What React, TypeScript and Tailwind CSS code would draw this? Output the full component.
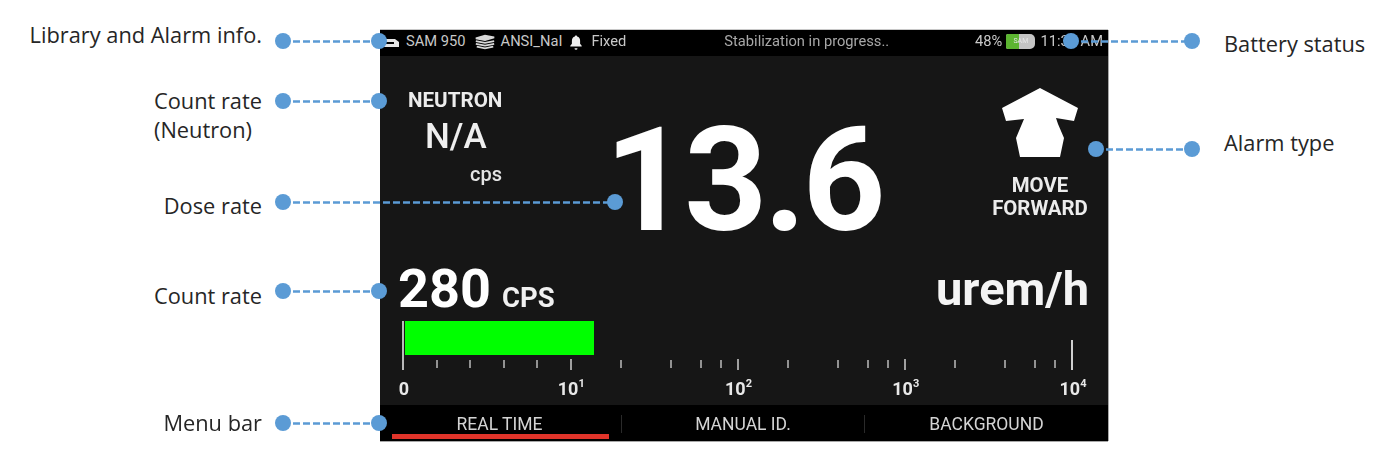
import React from "react";

const minorTicks = [437, 470, 504, 537, 621, 671, 701, 721, 788, 838, 868, 888, 955, 1005, 1035, 1055];
const majorTicks = [571, 738, 905];

function Pin({ className }: { className: string }) {
  return <span className={`absolute z-20 h-4 w-4 rounded-full bg-[#5b9bd5] ${className}`} />;
}

function Lead({ className, width }: { className: string; width: number }) {
  return (
    <svg className={`absolute z-10 h-[3px] ${className}`} width={width} height={3}>
      <line x1={0} y1={1.5} x2={width} y2={1.5} stroke="#5b9bd5" strokeWidth={2.4} strokeDasharray="7 3" />
    </svg>
  );
}

function Label({ className, children }: { className: string; children: React.ReactNode }) {
  return (
    <div className={`absolute whitespace-nowrap text-[21.8px] leading-[29px] text-[#262626] [font-family:'Open_Sans',sans-serif] ${className}`}>
      {children}
    </div>
  );
}

function AxisLabel({ base, exp }: { base: string; exp?: string }) {
  return (
    <div className="flex w-0 justify-center whitespace-nowrap text-[18px] font-bold leading-5 text-[#e8e8e8]">
      <span>
        {base}
        {exp && <sup className="relative top-[-1px] align-super text-[11px] leading-none">{exp}</sup>}
      </span>
    </div>
  );
}

export default function App() {
  return (
    <div className="relative h-[462px] w-[1397px] overflow-hidden bg-white">
      <div className="pl-[380px] pt-[30px]">
        <div className="flex h-[411px] w-[728px] flex-col bg-[#161616] text-white shadow-[1px_0_0_#a8a8a8,0_1px_0_#a8a8a8,0_-1px_0_#c8c8c8] blur-[0.4px] [font-family:Roboto,sans-serif]">
          {/* status bar */}
          <div className="flex h-[26px] items-center bg-black pb-[3px] pr-[5px] text-[14.7px] text-[#c8c8c8]">
            <svg width="20" height="12" viewBox="0 0 20 12" className="ml-[1px] mr-[5px]">
              <path d="M1 3h13l4 3v5H1z" fill="#e6e6e6" />
              <path d="M3 6h10v2H3z" fill="#000" />
            </svg>
            <span>SAM 950</span>
            <svg width="22" height="16" viewBox="0 0 24 16" className="ml-[8px] mr-[5px]" fill="none" stroke="#d8d8d8" strokeWidth="1.8">
              <path d="M2 4 12 1l10 2-10 3z" fill="#d8d8d8" />
              <path d="M2 7 12 9l10-2" />
              <path d="M2 10 12 12l10-2" />
              <path d="M3 13 12 15l9-2" />
            </svg>
            <span>ANSI_NaI</span>
            <svg width="14" height="16" viewBox="0 0 14 16" className="ml-[7px] mr-[8px]" fill="#efefef">
              <path d="M7 1.500c.7 0 1.100.4 1.100 1 2 .5 3 2.200 3 4.200v3l1.600 2v.8H1.300v-.8l1.600-2v-3c0-2 1-3.700 3-4.200 0-.6.4-1 1.100-1z" />
              <path d="M5.500 14.200h3a1.500 1.500 0 0 1-3 0z" />
            </svg>
            <span>Fixed</span>
            <span className="ml-[98px] w-[162px] whitespace-nowrap text-[#a8a8a8]">Stabilization in progress..</span>
            <span className="ml-auto">48%</span>
            <div className="relative ml-[4px] flex h-[15px] w-[29px] overflow-hidden rounded-l-[2px] rounded-r-[5px] bg-[#c4c4c4]">
              <div className="w-[13px] bg-[#5cb531]" />
              <span className="absolute inset-0 text-center text-[7px] leading-[15px] text-[#e6e6e6]">SAM</span>
            </div>
            <span className="ml-[5px]">11:30 AM</span>
          </div>

          {/* readings */}
          <div className="flex h-[205px] pl-[28px] pr-[30px]">
            <div className="w-[200px] pt-[34px]">
              <div className="text-[20.600px] font-bold leading-5 text-[#ececec]">NEUTRON</div>
              <div className="mt-[9px] pl-[17px] text-[35px] font-medium leading-9 text-[#efefef]">N/A</div>
              <div className="mt-[9px] pl-[62px] text-[20px] font-medium leading-5 text-[#e4e4e4]">cps</div>
            </div>
            <div className="w-[398px]">
              <div className="ml-[-2px] mt-[49px] text-[145px] font-bold leading-[150px] tracking-[-3.500px] text-white">13.6</div>
            </div>
            <div className="flex w-[76px] flex-col items-center pt-[32px]">
              <svg width="76" height="70" viewBox="0 0 76 70" className="shrink-0">
                <path d="M38 0 76 20 72 33 54 30 56 36 62 50 58 69H18L14 50 22 31 4 33 0 20z" fill="#fff" />
              </svg>
              <div className="mt-[16px] whitespace-nowrap text-center text-[20.400px] font-bold leading-[23px] text-[#ececec]">
                MOVE
                <br />
                FORWARD
              </div>
            </div>
          </div>

          {/* count rate */}
          <div className="flex h-[56px] items-end justify-between pl-[18px] pr-[19px]">
            <div className="flex items-baseline">
              <span className="text-[54px] font-bold leading-[56px] text-white">280</span>
              <span className="ml-[11px] text-[27.500px] font-bold leading-[30px] text-[#f0f0f0]">CPS</span>
            </div>
            <span className="text-[47px] font-bold leading-[56px] text-[#f4f4f4]">urem/h</span>
          </div>

          {/* bar graph */}
          <div className="mt-[4px] pl-[25px]">
            <div className="h-[34px] w-[189px] bg-[#00ff00]" />
          </div>
          <svg className="block" width="728" height="15" viewBox="380 355 728 15">
            {minorTicks.map((x) => (
              <line key={x} x1={x} x2={x} y1={360} y2={368} stroke="#bdbdbd" strokeWidth={1.5} />
            ))}
            {majorTicks.map((x) => (
              <line key={x} x1={x} x2={x} y1={359} y2={370} stroke="#cfcfcf" strokeWidth={1.5} />
            ))}
          </svg>
          <div className="mt-[9px] flex justify-between pl-[24px] pr-[35px]">
            <AxisLabel base="0" />
            <AxisLabel base="10" exp="1" />
            <AxisLabel base="10" exp="2" />
            <AxisLabel base="10" exp="3" />
            <AxisLabel base="10" exp="4" />
          </div>

          {/* menu bar */}
          <div className="mt-auto flex h-[36px] items-stretch bg-black pt-[2px] text-[17.500px] text-[#d4d4d4]">
            <div className="my-[8px] flex w-[242px] items-center justify-center border-r border-[#2a2a2a] pr-[2px]">
              <span>REAL TIME</span>
            </div>
            <div className="my-[8px] flex w-[243px] items-center justify-center border-r border-[#2a2a2a]">
              <span>MANUAL ID.</span>
            </div>
            <div className="my-[8px] flex flex-1 items-center justify-center">
              <span>BACKGROUND</span>
            </div>
          </div>
        </div>
      </div>

      {/* overlays on the screen */}
      <div className="absolute left-[402px] top-[321px] h-[49px] w-[2px] bg-[#b8b8b8]" />
      <div className="absolute left-[1071px] top-[340px] h-[30px] w-[2px] bg-[#d0d0d0]" />
      <div className="absolute left-[392px] top-[434px] h-[5px] w-[217px] bg-[#e0342a]" />

      {/* callouts */}
      <Label className="right-[1135px] top-[20px]">Library and Alarm info.</Label>
      <Label className="right-[1135px] top-[86px]">
        <div className="text-left">
          Count rate
          <br />
          (Neutron)
        </div>
      </Label>
      <Label className="right-[1135px] top-[191px]">Dose rate</Label>
      <Label className="right-[1135px] top-[281px]">Count rate</Label>
      <Label className="right-[1135px] top-[408px]">Menu bar</Label>
      <Label className="left-[1224px] top-[29px]">Battery status</Label>
      <Label className="left-[1224px] top-[128px]">Alarm type</Label>

      <Lead className="left-[283px] top-[40px]" width={96} />
      <Lead className="left-[283px] top-[100px]" width={96} />
      <Lead className="left-[283px] top-[201px]" width={332} />
      <Lead className="left-[283px] top-[290px]" width={96} />
      <Lead className="left-[283px] top-[422px]" width={96} />
      <Lead className="left-[1071px] top-[40px]" width={121} />
      <Lead className="left-[1096px] top-[148px]" width={96} />

      <Pin className="left-[275px] top-[33px]" />
      <Pin className="left-[371px] top-[33px]" />
      <Pin className="left-[275px] top-[93px]" />
      <Pin className="left-[371px] top-[93px]" />
      <Pin className="left-[275px] top-[194px]" />
      <Pin className="left-[607px] top-[194px]" />
      <Pin className="left-[275px] top-[283px]" />
      <Pin className="left-[371px] top-[283px]" />
      <Pin className="left-[275px] top-[415px]" />
      <Pin className="left-[371px] top-[415px]" />
      <Pin className="left-[1063px] top-[33px]" />
      <Pin className="left-[1184px] top-[33px]" />
      <Pin className="left-[1088px] top-[141px]" />
      <Pin className="left-[1184px] top-[141px]" />
    </div>
  );
}
